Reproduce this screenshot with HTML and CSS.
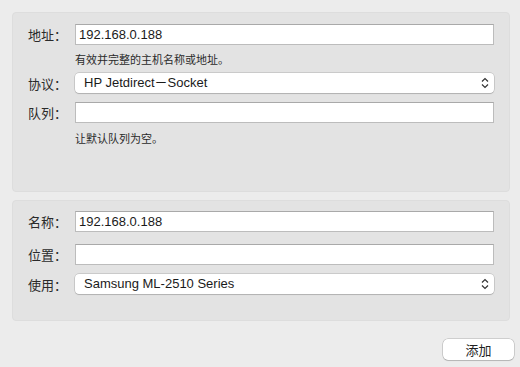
FILE: index.html
```html
<!DOCTYPE html>
<html lang="zh-CN">
<head>
  <meta charset="UTF-8" />
  <meta name="viewport" content="width=device-width, initial-scale=1" />
  <title>添加打印机</title>
  <link rel="stylesheet" href="styles.css">
</head>
<body>
  <div class="window">
    <div class="panel panel-top">
      <div class="row">
        <label class="label">地址：</label>
        <div class="field">192.168.0.188</div>
      </div>
      <p class="hint hint-first">有效并完整的主机名称或地址。</p>
      <div class="row row-protocol">
        <label class="label">协议：</label>
        <div class="popup">
          <span>HP Jetdirect－Socket</span>
          <svg class="arrows" width="8" height="12" viewBox="0 0 8 12">
            <path d="M1 4.5 L4 1.5 L7 4.5 M1 7.5 L4 10.5 L7 7.5" fill="none" stroke="#333" stroke-width="1.2"/>
          </svg>
        </div>
      </div>
      <div class="row row-queue">
        <label class="label">队列：</label>
        <div class="field"></div>
      </div>
      <p class="hint hint-second">让默认队列为空。</p>
    </div>

    <div class="panel panel-bottom">
      <div class="row">
        <label class="label">名称：</label>
        <div class="field">192.168.0.188</div>
      </div>
      <div class="row row-location">
        <label class="label">位置：</label>
        <div class="field"></div>
      </div>
      <div class="row row-use">
        <label class="label">使用：</label>
        <div class="popup">
          <span>Samsung ML-2510 Series</span>
          <svg class="arrows" width="8" height="12" viewBox="0 0 8 12">
            <path d="M1 4.5 L4 1.5 L7 4.5 M1 7.5 L4 10.5 L7 7.5" fill="none" stroke="#333" stroke-width="1.2"/>
          </svg>
        </div>
      </div>
    </div>

    <div class="actions">
      <button class="btn">添加</button>
    </div>
  </div>
</body>
</html>
```

FILE: styles.css
```css
body {
  margin: 0;
  background: #ececec;
  font-family: "Liberation Sans", "Noto Sans CJK SC", sans-serif;
  color: #222;
  width: 520px;
  height: 367px;
  overflow: hidden;
}
.window {
  padding: 12px 10px 0 12px;
}
.panel {
  background: #e3e3e3;
  border: 1px solid #dddddd;
  border-radius: 4px;
  box-sizing: border-box;
  width: 498px;
  padding: 0 15px 0 15px;
}
.panel-top {
  height: 180px;
  padding-top: 11px;
}
.panel-bottom {
  margin-top: 8px;
  height: 121px;
  padding-top: 10px;
}
.row {
  display: flex;
  align-items: center;
}
.label {
  width: 47px;
  flex: none;
  font-size: 13px;
  color: #2a2a2a;
  font-family: "Noto Sans CJK SC", sans-serif;
}
.field {
  flex: 1;
  height: 21px;
  box-sizing: border-box;
  background: #fff;
  border: 1px solid #bcbcbc;
  border-top-color: #a9a9a9;
  font-size: 13px;
  line-height: 19px;
  padding-left: 3px;
  color: #1a1a1a;
}
.popup {
  flex: 1;
  height: 20px;
  box-sizing: border-box;
  background: #fff;
  border-radius: 4px;
  box-shadow: 0 0 0 0.5px rgba(0,0,0,0.22), 0 1px 1px rgba(0,0,0,0.12);
  font-size: 13px;
  line-height: 20px;
  padding: 0 5px 0 9px;
  display: flex;
  justify-content: space-between;
  align-items: center;
  color: #1a1a1a;
}
.arrows {
  flex: none;
}
.hint {
  margin: 0 0 0 47px;
  font-size: 11px;
  line-height: 15px;
  font-family: "Noto Sans CJK SC", sans-serif;
  color: #2a2a2a;
}
.hint-first {
  margin-top: 7px;
}
.row-protocol {
  margin-top: 6px;
}
.row-queue {
  margin-top: 9px;
}
.hint-second {
  margin-top: 8px;
}
.row-location {
  margin-top: 12px;
}
.row-use {
  margin-top: 9px;
}
.actions {
  display: flex;
  justify-content: flex-end;
  margin-top: 18px;
  margin-right: -4px;
}
.btn {
  width: 71px;
  height: 21px;
  background: #fff;
  border: none;
  border-radius: 5px;
  box-shadow: 0 0 0 0.5px rgba(0,0,0,0.25), 0 1px 1px rgba(0,0,0,0.12);
  font-family: "Noto Sans CJK SC", sans-serif;
  font-size: 13px;
  color: #222;
  padding: 0;
}
```
